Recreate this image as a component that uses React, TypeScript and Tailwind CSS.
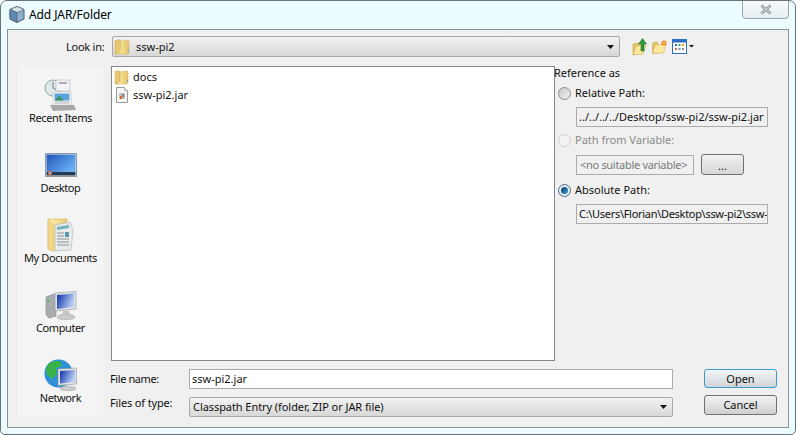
import { useId } from "react";

const font = { fontFamily: '"Noto Sans", Tahoma, sans-serif' };

const FolderIcon = ({ size = 16 }: { size?: number }) => {
  const id = useId();
  return (
    <svg width={size} height={size} viewBox="0 0 16 16" className="shrink-0">
      <defs>
        <linearGradient id={id} x1="0" y1="0" x2="1" y2="0">
          <stop offset="0" stopColor="#fdf0b0" />
          <stop offset="1" stopColor="#e8c56a" />
        </linearGradient>
      </defs>
      <path d="M1 2.5 L5 1.5 L6 3 L6 14.5 L1.5 15 Q1 15 1 14 Z" fill="#e9c96f" stroke="#c9a750" strokeWidth="0.5" />
      <path d="M6 3 L13 2 Q14 2 14 3 L14 14 Q14 15 13 15 L2 15 Q5 14 6 12 Z" fill={`url(#${id})`} stroke="#cfae58" strokeWidth="0.5" />
      <rect x="13" y="11" width="1" height="2" fill="#5aa7d8" />
    </svg>
  );
};

const JarFileIcon = () => (
  <svg width="14" height="16" viewBox="0 0 14 16" className="shrink-0">
    <path d="M1.5 .5 H9.5 L12.5 3.5 V15.5 H1.5 Z" fill="#f6f6f6" stroke="#9a9a9a" />
    <path d="M9.5 .5 V3.5 H12.5" fill="#fff" stroke="#b0b0b0" />
    <rect x="4" y="6" width="6" height="6" fill="#c9c0b0" />
    <rect x="5" y="9" width="2" height="3" fill="#d2691e" />
    <rect x="7" y="7" width="2" height="3" fill="#6a88b8" />
  </svg>
);

const RecentIcon = () => (
  <svg width="34" height="34" viewBox="0 0 34 34">
    <circle cx="9" cy="10" r="8" fill="#dfe8ea" stroke="#9aa8ad" />
    <path d="M9 4 V10 L13 12" fill="none" stroke="#8a979c" strokeWidth="1.2" />
    <rect x="12" y="2" width="14" height="11" fill="#f3f3f3" stroke="#b5b5b5" strokeWidth="0.6" />
    <rect x="15" y="4" width="8" height="2" fill="#b6a8c4" />
    <path d="M6 27 L30 27 L32 32 L9 33 Z" fill="#a8a8a8" />
    <rect x="9" y="14" width="18" height="13" fill="#fff" stroke="#b5b5b5" strokeWidth="0.6" />
    <rect x="10.5" y="15.5" width="15" height="7" fill="#5aa4e0" />
    <path d="M10.5 22.5 L15 18 L20 22.5 Z" fill="#3f8f5a" />
    <rect x="10.5" y="23" width="15" height="3" fill="#d5d5d5" />
  </svg>
);

const DesktopIcon = () => {
  const id = useId();
  return (
    <svg width="32" height="24" viewBox="0 0 32 24">
      <defs>
        <linearGradient id={id} x1="0" y1="0" x2="1" y2="0.7">
          <stop offset="0" stopColor="#1f55b8" />
          <stop offset="1" stopColor="#6cb1f4" />
        </linearGradient>
      </defs>
      <rect x="0.5" y="0.5" width="31" height="23" fill="#e8e8e8" stroke="#8d9aa5" />
      <rect x="1.5" y="1.5" width="29" height="17.5" fill={`url(#${id})`} />
      <rect x="1.5" y="19" width="29" height="3.5" fill="#263a50" />
      <circle cx="5" cy="20" r="2.2" fill="#e2622c" />
      <circle cx="5" cy="20" r="1.2" fill="#6cc0f0" />
    </svg>
  );
};

const DocumentsIcon = () => {
  const id = useId();
  return (
    <svg width="28" height="34" viewBox="0 0 28 34">
      <defs>
        <linearGradient id={id} x1="0" y1="0" x2="1" y2="0">
          <stop offset="0" stopColor="#fdf1b5" />
          <stop offset="1" stopColor="#e9c971" />
        </linearGradient>
      </defs>
      <path d="M1 1 L20 1 L20 24 L7 33 L1 31 Z" fill={`url(#${id})`} stroke="#d6b963" strokeWidth="0.6" />
      <path d="M8 7 L23 4 L26 12 L24 32 L8 33 Z" fill="#e9eaea" stroke="#a8b0b0" strokeWidth="0.6" />
      <path d="M10 9 L22 7 L22 10 L10 12 Z" fill="#6fb4b8" />
      <path d="M10 15 H17 M10 18 H17 M10 21 H22 M10 24 H22 M10 27 H22" stroke="#8d9498" />
      <rect x="18" y="14" width="4" height="5" fill="#5b97b0" />
      <path d="M1 31 L7 33 L7 8 L1 1 Z" fill="#f0d888" stroke="#d6b963" strokeWidth="0.5" />
    </svg>
  );
};

const ComputerIcon = () => {
  const id = useId();
  return (
    <svg width="32" height="29" viewBox="0 0 32 29">
      <defs>
        <linearGradient id={id} x1="0" y1="0" x2="1" y2="0.4">
          <stop offset="0" stopColor="#0a2ea8" />
          <stop offset="1" stopColor="#b8ccf4" />
        </linearGradient>
      </defs>
      <path d="M1 6 L9 3 L11 5 L11 25 L4 27 L1 24 Z" fill="#a9adb0" stroke="#6f7477" strokeWidth="0.5" />
      <rect x="2.5" y="9" width="2" height="2" fill="#49c04a" />
      <path d="M10 2 L31 0.5 L31 18 L10 20 Z" fill="#dfe3e6" stroke="#8d9398" strokeWidth="0.6" />
      <path d="M12 4 L29 2.5 L29 16 L12 18 Z" fill={`url(#${id})`} />
      <path d="M18 20 L24 19.5 L25 23 L17 23.5 Z" fill="#c8c8c8" />
      <ellipse cx="21" cy="26" rx="9" ry="2.8" fill="#c8cacc" stroke="#a0a2a4" strokeWidth="0.5" />
    </svg>
  );
};

const NetworkIcon = () => {
  const id = useId();
  return (
    <svg width="33" height="32" viewBox="0 0 33 32">
      <defs>
        <linearGradient id={id} x1="0" y1="0" x2="1" y2="0.4">
          <stop offset="0" stopColor="#0a2ea8" />
          <stop offset="1" stopColor="#b8ccf4" />
        </linearGradient>
      </defs>
      <circle cx="14.5" cy="14.5" r="14" fill="#2f8fd8" />
      <path d="M4 5 Q10 1 16 2 L18 7 L12 9 L13 15 L8 20 L3 16 Q1 10 4 5 Z" fill="#37b34a" />
      <path d="M16 22 L22 20 L22 26 L17 27 Z" fill="#37b34a" />
      <path d="M14 10 L32.5 9 L32.5 25 L14 26.5 Z" fill="#dfe3e6" stroke="#8d9398" strokeWidth="0.6" />
      <path d="M16 12 L31 11 L31 23 L16 24.5 Z" fill={`url(#${id})`} />
      <ellipse cx="24" cy="29.5" rx="8" ry="2.3" fill="#c8cacc" stroke="#a0a2a4" strokeWidth="0.5" />
    </svg>
  );
};

const UpFolderIcon = () => (
  <svg width="16" height="18" viewBox="0 0 16 18">
    <path d="M1 6 L7 5 L7 15 L1 17 Z" fill="#e5c463" stroke="#b99a3f" strokeWidth="0.5" />
    <path d="M1 17 L4 8 L14 7 L11 16 Z" fill="#fbe89c" stroke="#c9a94f" strokeWidth="0.6" />
    <path d="M9 13 L9 6 L6.5 6 L10.5 .5 L14.5 6 L12 6 L12 13 Z" fill="#2f9a35" stroke="#1d6e22" strokeWidth="0.5" />
  </svg>
);

const NewFolderIcon = () => (
  <svg width="16" height="14" viewBox="0 0 16 14">
    <path d="M0.5 3 L5 2 L6 4 L6 13 L0.5 13.5 Z" fill="#e5c463" stroke="#c4a54c" strokeWidth="0.5" />
    <path d="M0.5 13.5 L3 5 L14 4 L11.5 13 Z" fill="#fbe89c" stroke="#d0b158" strokeWidth="0.6" />
    <circle cx="12" cy="3" r="2.6" fill="#f08a2c" />
    <circle cx="12" cy="3" r="1.1" fill="#fdd76a" />
  </svg>
);

const ViewMenuIcon = () => (
  <svg width="23" height="15" viewBox="0 0 23 15">
    <rect x="0.5" y="0.5" width="14" height="14" fill="#fff" stroke="#2c6fc4" />
    <rect x="1" y="1" width="13" height="2.5" fill="#2c6fc4" />
    <rect x="3" y="5" width="2" height="2" fill="#3f72c8" />
    <rect x="6.5" y="5" width="2" height="2" fill="#3fa04a" />
    <rect x="10" y="5" width="2" height="2" fill="#e0a030" />
    <rect x="3" y="9" width="2" height="2" fill="#d86a30" />
    <rect x="6.5" y="9" width="2" height="2" fill="#4f9ad8" />
    <rect x="10" y="9" width="2" height="2" fill="#808890" />
    <path d="M17 6 H22 L19.5 8.5 Z" fill="#111" />
  </svg>
);

const Arrow = () => (
  <svg width="7" height="4" viewBox="0 0 7 4" className="shrink-0">
    <path d="M0 0 H7 L3.5 4 Z" fill="#111" />
  </svg>
);

const Radio = ({ state }: { state: "off" | "on" | "disabled" }) => (
  <span
    className={
      state === "disabled"
        ? "flex h-[13px] w-[13px] shrink-0 rounded-full border border-[#cfcfcf] bg-[#f2f2f2]"
        : state === "on"
          ? "flex h-[13px] w-[13px] shrink-0 items-center justify-center rounded-full border border-[#4d6b85] bg-[#e4eef5]"
          : "flex h-[13px] w-[13px] shrink-0 rounded-full border border-[#8a8a8a] bg-gradient-to-br from-[#c8c8c8] to-[#f4f4f4]"
    }
  >
    {state === "on" && <span className="h-[7px] w-[7px] rounded-full bg-gradient-to-br from-[#0c3d66] to-[#3f9bd8]" />}
  </span>
);

const places = [
  { label: "Recent Items", icon: <RecentIcon /> },
  { label: "Desktop", icon: <DesktopIcon /> },
  { label: "My Documents", icon: <DocumentsIcon /> },
  { label: "Computer", icon: <ComputerIcon /> },
  { label: "Network", icon: <NetworkIcon /> },
];

export default function App() {
  return (
    <div
      className="flex h-[435px] w-[796px] flex-col overflow-hidden rounded-t-[7px] rounded-b-[5px] border border-[#66757a] bg-[#ecfcff] text-[11px] leading-[14px] text-[#111]"
      style={font}
    >
      {/* title bar */}
      <div className="flex h-[28px] shrink-0 items-start">
        <div className="ml-[8px] mt-[5px] flex items-center gap-[4px]">
          <svg width="16" height="17" viewBox="0 0 16 17">
            <path d="M8 .5 L15 3.5 L15 13 L8 16.5 L1 13 L1 3.5 Z" fill="#8fb0cc" stroke="#4a5b6a" />
            <path d="M1 3.5 L8 6.5 L15 3.5 L8 .5 Z" fill="#d6e4f0" stroke="#4a5b6a" strokeWidth="0.6" />
            <path d="M8 6.5 V16.5 L1 13 V3.5 Z" fill="#5f88b2" stroke="#4a5b6a" strokeWidth="0.6" />
          </svg>
          <span className="text-[12px] leading-[17px] tracking-[-0.1px] text-black">Add JAR/Folder</span>
        </div>
        <div className="ml-auto mr-[6px] flex h-[19px] w-[47px] -translate-y-px items-center justify-center rounded-b-[4px] border border-[#9aa6aa] bg-gradient-to-b from-[#f8fbfb] to-[#e6eef0]">
          <svg width="12" height="11" viewBox="0 0 12 11">
            <path d="M1.5 1.5 L10.5 9.5 M10.5 1.5 L1.5 9.5" stroke="#7e8a90" strokeWidth="2.6" />
            <path d="M1.5 1.5 L10.5 9.5 M10.5 1.5 L1.5 9.5" stroke="#f4f6f6" strokeWidth="1" />
          </svg>
        </div>
      </div>

      {/* dialog body */}
      <div className="mx-[6px] flex h-[399px] shrink-0 flex-col border border-[#8b9598] bg-[#f0f0f0]">
        <div className="mt-[6px] flex h-[21px] items-center">
          <span className="ml-[58px] w-[46px] tracking-[-0.25px]">Look in:</span>
          <div className="flex h-[21px] w-[508px] items-center rounded-[2px] border border-[#a8a8a8] bg-gradient-to-b from-[#f2f2f2] to-[#d8d8d8] pr-[5px] pl-[1px]">
            <FolderIcon size={17} />
            <span className="ml-[5px]">ssw-pi2</span>
            <span className="ml-auto flex">
              <Arrow />
            </span>
          </div>
          <div className="ml-[12px] flex items-center gap-[4px]">
            <UpFolderIcon />
            <NewFolderIcon />
            <ViewMenuIcon />
          </div>
        </div>

        <div className="mt-[9px] flex">
          {/* places */}
          <div className="ml-[10px] flex h-[351px] w-[85px] shrink-0 flex-col bg-[#f4f4f4] pt-[12px]">
            {places.map((p) => (
              <div key={p.label} className="flex h-[70px] shrink-0 flex-col items-center">
                <div className="flex h-[34px] shrink-0 items-center justify-center">{p.icon}</div>
                <span className="mt-[-1px] whitespace-nowrap tracking-[-0.4px]">{p.label}</span>
              </div>
            ))}
          </div>

          <div className="ml-[8px] flex min-w-0 flex-col">
            <div className="flex h-[295px]">
              {/* file list */}
              <div className="flex w-[444px] shrink-0 flex-col border border-[#828790] bg-white pt-[1px] pl-[2px]">
                <div className="flex h-[18px] items-center gap-[3px]">
                  <FolderIcon />
                  <span>docs</span>
                </div>
                <div className="flex h-[18px] items-center gap-[4px] pl-[1px]">
                  <JarFileIcon />
                  <span>ssw-pi2.jar</span>
                </div>
              </div>

              {/* reference as */}
              <div className="-ml-px flex min-w-0 flex-col">
                <span>Reference as</span>
                <div className="mt-[6px] ml-[4px] flex h-[14px] items-center gap-[3px]">
                  <Radio state="off" />
                  <span className="ml-px">Relative Path:</span>
                </div>
                <div className="mt-[7px] ml-[22px] flex h-[20px] w-[192px] items-center overflow-hidden border border-[#ababab] pl-[2px] whitespace-nowrap">
                  ../../../../Desktop/ssw-pi2/ssw-pi2.jar
                </div>
                <div className="mt-[6px] ml-[4px] flex h-[14px] items-center gap-[3px] text-[#8a8a8a]">
                  <Radio state="disabled" />
                  <span className="ml-px">Path from Variable:</span>
                </div>
                <div className="mt-[7px] ml-[22px] flex items-center gap-[7px]">
                  <div className="flex h-[20px] w-[118px] items-center border border-[#ababab] pl-[3px] tracking-[-0.3px] whitespace-nowrap text-[#7a7a7a]">
                    &lt;no suitable variable&gt;
                  </div>
                  <div className="flex h-[21px] w-[43px] items-center justify-center rounded-[3px] border border-[#707070] bg-gradient-to-b from-[#f2f2f2] to-[#d6d6d6] pt-[3px]">
                    ...
                  </div>
                </div>
                <div className="mt-[8px] ml-[4px] flex h-[14px] items-center gap-[3px]">
                  <Radio state="on" />
                  <span className="ml-px">Absolute Path:</span>
                </div>
                <div className="mt-[7px] ml-[22px] flex h-[20px] w-[192px] items-center overflow-hidden border border-[#ababab] pl-[2px] tracking-[-0.3px] whitespace-nowrap">
                  C:\Users\Florian\Desktop\ssw-pi2\ssw-
                </div>
              </div>
            </div>

            {/* name, type and the two buttons */}
            <div className="mt-[8px] -ml-px flex">
              <div className="flex w-[563px] shrink-0 flex-col gap-[8px]">
                <div className="flex h-[20px] items-center">
                  <span className="w-[79px] shrink-0 tracking-[-0.4px]">File name:</span>
                  <div className="flex h-[20px] flex-1 items-center border border-[#ababab] bg-white pl-[2px]">
                    ssw-pi2.jar
                  </div>
                </div>
                <div className="flex h-[20px]">
                  <span className="mt-[-1px] w-[79px] shrink-0 tracking-[-0.15px]">Files of type:</span>
                  <div className="flex h-[20px] flex-1 items-center rounded-[2px] border border-[#a8a8a8] bg-gradient-to-b from-[#f2f2f2] to-[#d8d8d8] pr-[5px] pl-[3px]">
                    <span className="tracking-[-0.07px]">Classpath Entry (folder, ZIP or JAR file)</span>
                    <span className="ml-auto flex">
                      <Arrow />
                    </span>
                  </div>
                </div>
              </div>
              <div className="ml-[31px] flex w-[73px] shrink-0 flex-col gap-[7px]">
                <div className="flex h-[19px] items-center justify-center rounded-[3px] border border-[#3c9ad0] bg-gradient-to-b from-[#f2f6f8] to-[#d0d4d6]">
                  Open
                </div>
                <div className="flex h-[20px] items-center justify-center rounded-[3px] border border-[#707070] bg-gradient-to-b from-[#f2f2f2] to-[#d0d0d0]">
                  Cancel
                </div>
              </div>
            </div>
          </div>
        </div>
      </div>
    </div>
  );
}
